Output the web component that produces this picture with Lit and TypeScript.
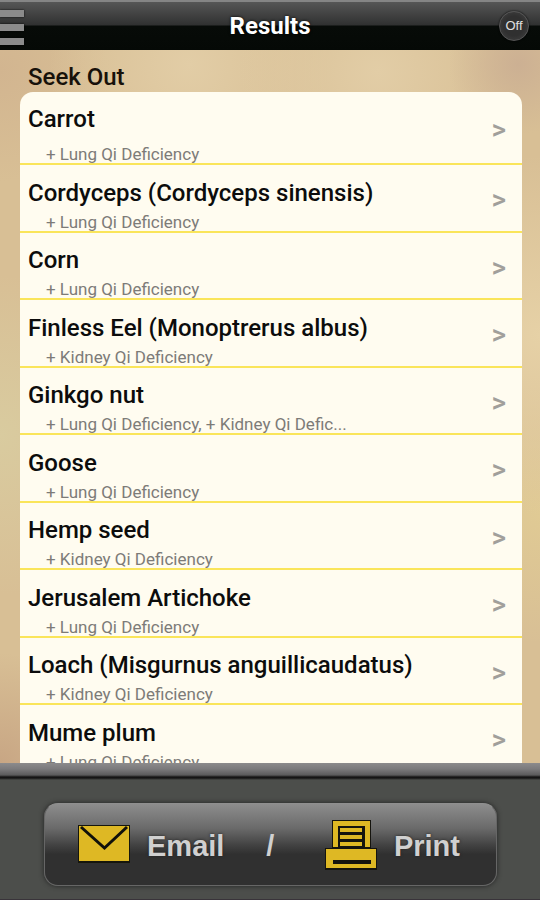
import { LitElement, html, css } from "lit";
import { customElement, property } from "lit/decorators.js";

interface Food {
  name: string;
  note: string;
}

const LUNG = "+ Lung Qi Deficiency";
const KIDNEY = "+ Kidney Qi Deficiency";

const FOODS: Food[] = [
  { name: "Carrot", note: LUNG },
  { name: "Cordyceps (Cordyceps sinensis)", note: LUNG },
  { name: "Corn", note: LUNG },
  { name: "Finless Eel (Monoptrerus albus)", note: KIDNEY },
  { name: "Ginkgo nut", note: "+ Lung Qi Deficiency, + Kidney Qi Defic..." },
  { name: "Goose", note: LUNG },
  { name: "Hemp seed", note: KIDNEY },
  { name: "Jerusalem Artichoke", note: LUNG },
  { name: "Loach (Misgurnus anguillicaudatus)", note: KIDNEY },
  { name: "Mume plum", note: LUNG },
];

@customElement("title-bar")
export class TitleBar extends LitElement {
  static styles = css`
    :host {
      display: block;
      flex: none;
    }
    .bar {
      display: grid;
      grid-template-columns: 1fr auto 1fr;
      align-items: center;
      box-sizing: border-box;
      height: 50px;
      border-top: 2px solid #858585;
      background: linear-gradient(#565656, #303131 23px, #070b08 24px, #050906);
    }
    .menu {
      display: flex;
      flex-direction: column;
      gap: 7px;
      width: 24px;
      padding: 2px 0 0;
      border: 0;
      background: none;
    }
    .line {
      height: 7px;
      background: #8b8b8b;
      box-shadow: 0 0 2px #000;
    }
    .title {
      margin: 0;
      font: 700 24px/48px Roboto, sans-serif;
      color: #fff;
      text-shadow: 0 0 3px #000;
    }
    .toggle {
      justify-self: end;
      width: 30px;
      height: 30px;
      margin-right: 11px;
      padding: 0;
      border: 1px solid #555;
      border-radius: 50%;
      background: radial-gradient(#303030 50%, #454545);
      box-shadow: 0 0 2px #000;
      font: 400 13px/28px "Liberation Sans", sans-serif;
      color: #e0e0e0;
    }
  `;

  render() {
    return html`
      <header class="bar">
        <button class="menu" aria-label="Menu">
          <span class="line"></span><span class="line"></span><span class="line"></span>
        </button>
        <h1 class="title">Results</h1>
        <button class="toggle">Off</button>
      </header>
    `;
  }
}

@customElement("food-list")
export class FoodList extends LitElement {
  @property({ attribute: false }) foods: Food[] = [];

  static styles = css`
    :host {
      display: block;
      font-family: Roboto, sans-serif;
    }
    .heading {
      margin: 0;
      padding: 12px 8px 0;
      font-size: 24px;
      font-weight: 500;
      line-height: 30px;
      color: #17110a;
    }
    .list {
      margin: 0;
      padding: 0;
      list-style: none;
      overflow: hidden;
      border-radius: 13px 13px 0 0;
      background: #fffcf0;
    }
    .row {
      display: flex;
      align-items: center;
      box-sizing: border-box;
      height: 68px;
      padding: 0 16px 0 8px;
      border-bottom: 2px solid #fae55a;
      color: #0c0c0c;
      text-decoration: none;
    }
    .item:nth-child(odd) .row {
      height: 67px;
    }
    .item:first-child .row {
      height: 73px;
    }
    .text {
      flex: 1;
      min-width: 0;
      align-self: flex-end;
    }
    .name {
      padding-bottom: 4px;
      font-size: 24px;
      font-weight: 500;
      line-height: 32px;
    }
    .item:first-child .name {
      padding-bottom: 10px;
    }
    .note {
      padding-left: 18px;
      font-size: 17px;
      line-height: 18px;
      color: #7d7b78;
      overflow: hidden;
      white-space: nowrap;
      text-overflow: ellipsis;
    }
    .arrow {
      padding-top: 4px;
      font-size: 28px;
      font-weight: 500;
      line-height: 32px;
      color: #a19f9b;
    }
  `;

  render() {
    return html`
      <h2 class="heading">Seek Out</h2>
      <ul class="list">
        ${this.foods.map(
          (food) => html`
            <li class="item">
              <a class="row" href="#">
                <div class="text">
                  <div class="name">${food.name}</div>
                  <div class="note">${food.note}</div>
                </div>
                <span class="arrow">&gt;</span>
              </a>
            </li>
          `,
        )}
      </ul>
    `;
  }
}

@customElement("share-bar")
export class ShareBar extends LitElement {
  static styles = css`
    :host {
      display: block;
      flex: none;
    }
    .bar {
      padding: 40px 43px 13px 44px;
      border-bottom: 1px solid #39343a;
      background: linear-gradient(
        #8c8b8c,
        #7b7a7c 6px,
        #5b5b5c 12px,
        #151515 14px,
        #151515 15px,
        #4c4e4b 17px
      );
    }
    .panel {
      display: flex;
      justify-content: space-between;
      align-items: center;
      box-sizing: border-box;
      height: 83px;
      padding: 2px 36px 0 24px;
      border: 1px solid #666;
      border-top-color: #8f8f8f;
      border-radius: 14px;
      background: linear-gradient(#8d8d8d, #6a6a6a 30%, #404040 52%, #303030 62%, #303030);
      box-shadow: 0 0 5px #222;
      font: 700 29px/40px "Liberation Sans", sans-serif;
      color: #d0d0d0;
    }
    .action {
      display: flex;
      align-items: center;
      gap: 8px;
      padding: 0;
      border: 0;
      background: none;
      font: inherit;
      color: inherit;
      text-shadow: 0 0 3px #222;
    }
    .icon {
      display: block;
      width: 70px;
      height: 60px;
    }
  `;

  render() {
    return html`
      <footer class="bar">
        <div class="panel">
          <button class="action">
            <svg class="icon" viewBox="0 0 70 60" aria-hidden="true">
              <rect x="9" y="9" width="52" height="38" fill="#16160c" />
              <rect x="10" y="10" width="50" height="35" fill="#deb824" />
              <path d="M12 11 L35.500 32 L58 11" fill="none" stroke="#11100a" stroke-width="3" />
            </svg>
            Email
          </button>
          <span>/</span>
          <button class="action">
            <svg class="icon" viewBox="0 0 70 60" aria-hidden="true">
              <path d="M16 4H55V32H61V54H9V32H16Z" fill="#15140e" />
              <path
                fill="#deb824"
                fill-rule="evenodd"
                d="M17 5H54V31H49V10H22V31H17ZM24 12H46V16H24ZM24 19H46V23H24ZM24 26H46V30H24ZM10 33H60V52H10ZM17 44V48H55V44Z"
              />
            </svg>
            Print
          </button>
        </div>
      </footer>
    `;
  }
}

@customElement("app-root")
export class AppRoot extends LitElement {
  static styles = css`
    :host {
      display: flex;
      flex-direction: column;
      height: 100vh;
      overflow: hidden;
    }
    .page {
      flex: 1;
      min-height: 0;
      overflow: hidden;
      padding: 0 18px 0 20px;
      background:
        radial-gradient(circle at 96% 2%, #ccb093, transparent 70px),
        radial-gradient(circle at 70% 3%, #e2cda6, transparent 140px),
        radial-gradient(circle at 35% 2%, #e2cda6, transparent 140px),
        radial-gradient(circle at 0% 3%, #d2b590, transparent 110px),
        radial-gradient(circle at 0% 54%, #d9cb9f, transparent 160px),
        radial-gradient(circle at 0% 100%, #c8a684, transparent 110px),
        radial-gradient(circle at 100% 40%, #e6d1a6, transparent 180px),
        radial-gradient(circle at 100% 65%, #e0ca94, transparent 130px),
        #d8bf95;
    }
  `;

  render() {
    return html`
      <title-bar></title-bar>
      <main class="page">
        <food-list .foods=${FOODS}></food-list>
      </main>
      <share-bar></share-bar>
    `;
  }
}
